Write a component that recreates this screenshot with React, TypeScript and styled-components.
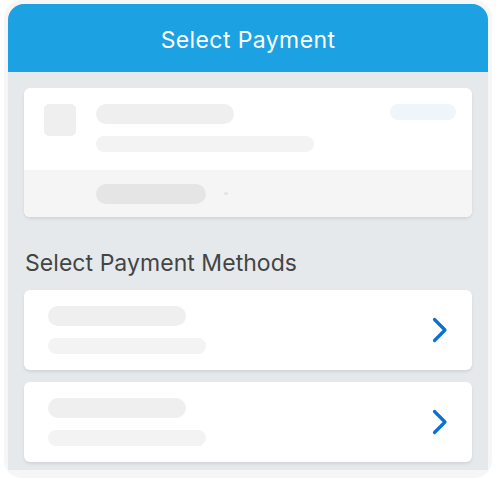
import * as React from 'react';
import styled, {createGlobalStyle} from 'styled-components';

const GlobalStyle = createGlobalStyle`
  html, body {
    margin: 0;
    padding: 0;
    background: #ffffff;
  }
  body {
    font-family: Inter, Roboto, "Liberation Sans", sans-serif;
  }
`;

const Frame = styled.div`
  box-sizing: border-box;
  width: 488px;
  margin-left: 4px;
  padding: 4px 4px 8px 4px;
  background: #f6f6f6;
  border-radius: 18px;
`;

const Screen = styled.div`
  width: 480px;
  background: #e6e9ec;
  border-radius: 16px 16px 0 0;
  overflow: hidden;
`;

const Header = styled.div`
  box-sizing: border-box;
  height: 68px;
  padding-top: 3px;
  background: #1ca1e2;
  color: #ffffff;
  display: flex;
  align-items: center;
  justify-content: center;
  font-size: 23px;
  letter-spacing: 0.4px;
`;

const Body = styled.div`
  padding: 16px 16px 8px 16px;
  display: flex;
  flex-direction: column;
`;

const Card = styled.div`
  background: #ffffff;
  border-radius: 6px;
  box-shadow: 0 2px 3px rgba(60, 70, 90, 0.12);
  overflow: hidden;
`;

const CardTop = styled.div`
  display: flex;
  padding: 16px 16px 18px 20px;
  height: 48px;
`;

const CardFoot = styled.div`
  background: #f5f5f5;
  height: 47px;
  display: flex;
  align-items: center;
  padding-left: 72px;
  gap: 18px;
`;

const Thumb = styled.div`
  width: 32px;
  height: 32px;
  border-radius: 5px;
  background: #efefef;
  flex-shrink: 0;
  margin-right: 20px;
`;

const Lines = styled.div`
  display: flex;
  flex-direction: column;
  gap: 12px;
  flex: 1;
`;

const Bar = styled.div<{$w: number; $h: number; $c?: string}>`
  width: ${p => p.$w}px;
  height: ${p => p.$h}px;
  border-radius: ${p => p.$h / 2}px;
  background: ${p => p.$c || '#efefef'};
  flex-shrink: 0;
`;

const Dot = styled.div`
  width: 4px;
  height: 3px;
  border-radius: 2px;
  background: #e4e4e4;
`;

const SectionTitle = styled.div`
  margin: 33px 0 14px 1px;
  font-size: 23px;
  letter-spacing: 0.05px;
  color: #444444;
  line-height: 26px;
`;

const MethodCard = styled(Card)`
  display: flex;
  align-items: center;
  height: 80px;
  padding: 0 24px;
  margin-bottom: 12px;
  &:last-child {
    margin-bottom: 0;
  }
`;

const MethodLines = styled.div`
  display: flex;
  flex-direction: column;
  gap: 12px;
  flex: 1;
`;

const Chevron = () => (
  <svg width="16" height="26" viewBox="0 0 16 26" fill="none">
    <path d="M2.5 2.5 L13 13 L2.5 23.5" stroke="#0b70d4" strokeWidth="3.2" strokeLinecap="round" strokeLinejoin="round" />
  </svg>
);

const methods = ['card', 'bank'];

export default function App() {
  return (
    <>
      <GlobalStyle />
      <Frame>
        <Screen>
          <Header>Select Payment</Header>
          <Body>
            <Card>
              <CardTop>
                <Thumb />
                <Lines>
                  <Bar $w={138} $h={20} />
                  <Bar $w={218} $h={16} $c="#f3f3f3" />
                </Lines>
                <Bar $w={66} $h={16} $c="#eef6fc" />
              </CardTop>
              <CardFoot>
                <Bar $w={110} $h={20} $c="#e5e5e6" />
                <Dot />
              </CardFoot>
            </Card>
            <SectionTitle>Select Payment Methods</SectionTitle>
            {methods.map(m => (
              <MethodCard key={m}>
                <MethodLines>
                  <Bar $w={138} $h={20} />
                  <Bar $w={158} $h={16} $c="#f3f3f3" />
                </MethodLines>
                <Chevron />
              </MethodCard>
            ))}
          </Body>
        </Screen>
      </Frame>
    </>
  );
}
